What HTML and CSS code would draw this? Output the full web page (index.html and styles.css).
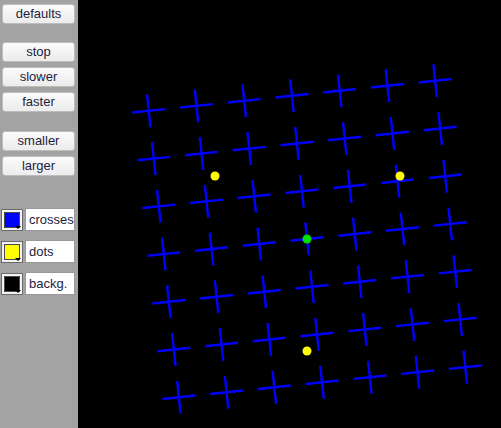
FILE: index.html
```html
<!DOCTYPE html>
<html>
<head>
<meta charset="utf-8">
<link rel="stylesheet" href="styles.css">
</head>
<body>
<div class="app">
  <div class="panel">
    <button class="btn">defaults</button>
    <div class="group">
      <button class="btn">stop</button>
      <button class="btn">slower</button>
      <button class="btn">faster</button>
    </div>
    <div class="group">
      <button class="btn">smaller</button>
      <button class="btn">larger</button>
    </div>
    <div class="colors">
      <div class="color-row">
        <div class="swatch"><div class="fill fill-blue"></div><span class="arrow"></span></div>
        <div class="label">crosses</div>
      </div>
      <div class="color-row">
        <div class="swatch"><div class="fill fill-yellow"></div><span class="arrow"></span></div>
        <div class="label">dots</div>
      </div>
      <div class="color-row">
        <div class="swatch"><div class="fill fill-black"></div><span class="arrow"></span></div>
        <div class="label">backg.</div>
      </div>
    </div>
  </div>
  <div class="canvas">
    <svg class="stage" width="423" height="428" viewBox="0 0 423 428">
      <defs>
        <path id="cross" d="M-16.5 0H16.5M0 -16.5V16.5" stroke="#0000ff" stroke-width="2.4" fill="none"/>
      </defs>
      <g transform="translate(229 239) rotate(-6)">
        <use href="#cross" x="-144" y="-144"/><use href="#cross" x="-96" y="-144"/><use href="#cross" x="-48" y="-144"/><use href="#cross" x="0" y="-144"/><use href="#cross" x="48" y="-144"/><use href="#cross" x="96" y="-144"/><use href="#cross" x="144" y="-144"/>
        <use href="#cross" x="-144" y="-96"/><use href="#cross" x="-96" y="-96"/><use href="#cross" x="-48" y="-96"/><use href="#cross" x="0" y="-96"/><use href="#cross" x="48" y="-96"/><use href="#cross" x="96" y="-96"/><use href="#cross" x="144" y="-96"/>
        <use href="#cross" x="-144" y="-48"/><use href="#cross" x="-96" y="-48"/><use href="#cross" x="-48" y="-48"/><use href="#cross" x="0" y="-48"/><use href="#cross" x="48" y="-48"/><use href="#cross" x="96" y="-48"/><use href="#cross" x="144" y="-48"/>
        <use href="#cross" x="-144" y="0"/><use href="#cross" x="-96" y="0"/><use href="#cross" x="-48" y="0"/><use href="#cross" x="0" y="0"/><use href="#cross" x="48" y="0"/><use href="#cross" x="96" y="0"/><use href="#cross" x="144" y="0"/>
        <use href="#cross" x="-144" y="48"/><use href="#cross" x="-96" y="48"/><use href="#cross" x="-48" y="48"/><use href="#cross" x="0" y="48"/><use href="#cross" x="48" y="48"/><use href="#cross" x="96" y="48"/><use href="#cross" x="144" y="48"/>
        <use href="#cross" x="-144" y="96"/><use href="#cross" x="-96" y="96"/><use href="#cross" x="-48" y="96"/><use href="#cross" x="0" y="96"/><use href="#cross" x="48" y="96"/><use href="#cross" x="96" y="96"/><use href="#cross" x="144" y="96"/>
        <use href="#cross" x="-144" y="144"/><use href="#cross" x="-96" y="144"/><use href="#cross" x="-48" y="144"/><use href="#cross" x="0" y="144"/><use href="#cross" x="48" y="144"/><use href="#cross" x="96" y="144"/><use href="#cross" x="144" y="144"/>
      </g>
      <circle cx="137" cy="176" r="4.5" fill="#ffff00"/>
      <circle cx="322" cy="176" r="4.5" fill="#ffff00"/>
      <circle cx="229" cy="351" r="4.5" fill="#ffff00"/>
      <circle cx="229" cy="239" r="4.5" fill="#00e000"/>
    </svg>
  </div>
</div>
</body>
</html>
```

FILE: styles.css
```css
html, body {
  margin: 0;
  padding: 0;
  background: #000;
}
.app {
  display: flex;
  width: 501px;
  height: 428px;
  overflow: hidden;
}
.panel {
  width: 78px;
  flex: none;
  background: #a3a3a3;
  box-sizing: border-box;
  padding: 4px 0 0 2px;
  display: flex;
  flex-direction: column;
  align-items: flex-start;
}
.group {
  display: flex;
  flex-direction: column;
  gap: 5px;
  margin-top: 18px;
}
.group + .group {
  margin-top: 19px;
}
.btn {
  width: 73px;
  height: 20px;
  box-sizing: border-box;
  margin: 0;
  padding: 0;
  border: 1px solid #bdbdbd;
  border-radius: 3px;
  background: linear-gradient(#fbfbfb, #ececec);
  font-family: "Liberation Sans", Arial, sans-serif;
  font-size: 13px;
  color: #1d1d40;
  line-height: 18px;
  text-align: center;
}
.colors {
  margin-top: 32px;
  display: flex;
  flex-direction: column;
  gap: 9px;
}
.color-row {
  display: flex;
  align-items: center;
  gap: 2px;
  height: 23px;
}
.swatch {
  position: relative;
  width: 22px;
  height: 22px;
  margin-left: -1px;
  box-sizing: border-box;
  border: 1px solid #6a6a6a;
  background: #f4f4f4;
  padding: 2px;
}
.fill {
  width: 100%;
  height: 100%;
  box-sizing: border-box;
  border: 1px solid #4a4a4a;
}
.fill-blue { background: #0000ff; }
.fill-yellow { background: #ffff00; }
.fill-black { background: #000; }
.arrow {
  position: absolute;
  right: 1px;
  bottom: 1px;
  width: 0;
  height: 0;
  border-left: 3px solid transparent;
  border-right: 3px solid transparent;
  border-top: 3px solid #000;
}
.label {
  width: 50px;
  height: 23px;
  box-sizing: border-box;
  border: 1px solid #9a9a9a;
  background: #fff;
  padding-left: 3px;
  font-family: "Liberation Sans", Arial, sans-serif;
  font-size: 13px;
  color: #1d1d40;
  line-height: 21px;
}
.canvas {
  flex: 1;
  background: #000;
}
.stage {
  display: block;
}
```
